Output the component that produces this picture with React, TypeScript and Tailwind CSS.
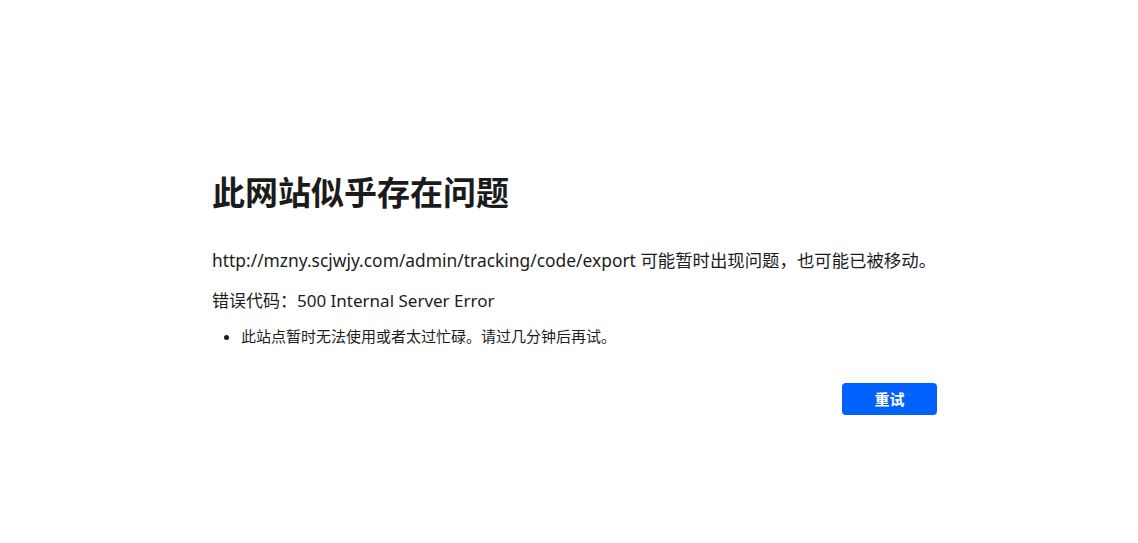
export default function App() {
  return (
    <div className="min-h-[543px] bg-white flex justify-center">
      <div className="w-[725px] ml-[11px] pt-[171px] text-[#1c1c1c] font-['Noto_Sans','Noto_Sans_CJK_SC',sans-serif]">
        {/* Heading */}
        <h1 className="text-[33px] font-bold leading-[44px] text-[#1b1b1b]">
          此网站似乎存在问题
        </h1>

        <p className="mt-[32px] text-[17.4px] leading-[26px]">
          http://mzny.scjwjy.com/admin/tracking/code/export 可能暂时出现问题，也可能已被移动。
        </p>
        <p className="mt-[15px] text-[17px] leading-[26px]">
          错误代码：500 Internal Server Error
        </p>

        <ul className="mt-[11px] pl-[29px] list-disc text-[15px] leading-[22px]">
          <li>此站点暂时无法使用或者太过忙碌。请过几分钟后再试。</li>
        </ul>

        <div className="mt-[36px] flex justify-end">
          <button className="w-[95px] h-[32px] rounded-[4px] bg-[#0061fe] text-white text-[15px] font-bold">
            重试
          </button>
        </div>
      </div>
    </div>
  );
}
